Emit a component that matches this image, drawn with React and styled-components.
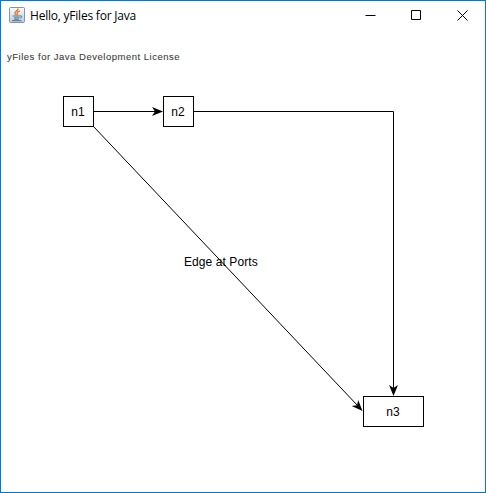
import React from 'react';
import styled, { createGlobalStyle } from 'styled-components';

const GlobalStyle = createGlobalStyle`
  * { box-sizing: border-box; }
  body { margin: 0; background: #fff; overflow: hidden; }
`;

const Window = styled.main`
  display: flex;
  flex-direction: column;
  width: 486px;
  height: 493px;
  border: 1px solid #0078d7;
  background: #fff;
  color: #000;
`;

const TitleBar = styled.header`
  display: flex;
  align-items: center;
  height: 30px;
  padding-left: 8px;
`;

const AppIcon = styled.svg`
  width: 16px;
  height: 16px;
  margin-bottom: 2px;
`;

const Title = styled.h1`
  flex: 1;
  margin: 0 0 0 5px;
  font: 400 12px/16px "Open Sans", sans-serif;
  letter-spacing: -0.22px;
  white-space: nowrap;
`;

const Controls = styled.div`
  display: flex;
  align-self: flex-start;
  gap: 1px;
`;

const ControlButton = styled.button`
  display: flex;
  align-items: center;
  justify-content: center;
  width: 45px;
  height: 29px;
  padding: 0;
  border: 0;
  background: transparent;
`;

const Canvas = styled.section`
  position: relative;
  flex: 1;
`;

const License = styled.div`
  padding: 20px 0 0 6px;
  font: 400 9.5px/12px "Liberation Sans", Arial, sans-serif;
  letter-spacing: 0.51px;
  -webkit-text-stroke: 0.1px #404040;
  color: #404040;
  white-space: nowrap;
`;

const Edges = styled.svg`
  position: absolute;
  inset: 0;
  width: 484px;
  height: 461px;
`;

const Node = styled.div`
  position: absolute;
  left: ${({ $x }) => $x}px;
  top: ${({ $y }) => $y}px;
  display: flex;
  align-items: center;
  justify-content: center;
  width: ${({ $width }) => $width}px;
  height: 31px;
  padding-right: 1px;
  border: 1px solid #000;
  background: #fff;
  font: 12px/14px "Liberation Sans", Arial, sans-serif;
`;

const EdgeLabel = styled.div`
  position: absolute;
  left: 183px;
  top: 224px;
  font: 12px/14px "Liberation Sans", Arial, sans-serif;
  letter-spacing: 0.08px;
  white-space: nowrap;
`;

const nodes = [
  { label: 'n1', x: 62, y: 65, width: 31 },
  { label: 'n2', x: 162, y: 65, width: 31 },
  { label: 'n3', x: 362, y: 365, width: 61 },
];

const arrows = [
  'translate(162 80.5)',
  'translate(392.5 365) rotate(90)',
  'translate(361.5 380) rotate(46.6)',
];

function JavaIcon() {
  return (
    <AppIcon viewBox="0 0 16 16" aria-hidden="true">
      <defs>
        <linearGradient id="tile" x1="0" y1="0" x2="0" y2="1">
          <stop offset="0" stopColor="#fafbfc" />
          <stop offset="1" stopColor="#bcccda" />
        </linearGradient>
      </defs>
      <rect x=".5" y=".5" width="15" height="15" rx="1" fill="url(#tile)" stroke="#8495a5" />
      <path d="M9 1.5C9.4 3.9 5.4 4.3 5.9 6.2c.2.8 1.1 1.2 1.3 1.9M10.9 3.9C9 4.7 7.8 5.4 8.2 6.3c.4.6.8 1.1.1 1.9" fill="none" stroke="#e77820" strokeWidth="1.3" />
      <path d="M3.8 9h7.4M5 10.9h5.2M5.3 12.3h4.4M11.2 8.9c2.4-.6 2.1 1.9-.5 2.3M3 13.7h9.5" fill="none" stroke="#436f93" strokeWidth=".95" />
    </AppIcon>
  );
}

function WindowControl({ label, d }) {
  return (
    <ControlButton aria-label={label}>
      <svg width="11" height="11" viewBox="0 0 11 11" fill="none" stroke="#000">
        <path d={d} />
      </svg>
    </ControlButton>
  );
}

export default function App() {
  return (
    <>
      <GlobalStyle />
      <Window>
        <TitleBar>
          <JavaIcon />
          <Title>Hello, yFiles for Java</Title>
          <Controls>
            <WindowControl label="Minimize" d="M.5 5.5h10" />
            <WindowControl label="Maximize" d="M.5.5h9v9h-9z" />
            <WindowControl label="Close" d="M.5.5l10 10m0-10l-10 10" />
          </Controls>
        </TitleBar>
        <Canvas>
          <License>yFiles for Java Development License</License>
          <Edges viewBox="0 0 484 461" aria-hidden="true">
            <g fill="none" stroke="#000">
              <path d="M93 80.5h62" />
              <path d="M193 80.5h199.5V358" />
              <path d="M92.5 95.5L357 375" />
            </g>
            {arrows.map((transform) => (
              <path key={transform} d="M0 0L-11-4.5L-8 0L-11 4.5z" fill="#000" transform={transform} />
            ))}
          </Edges>
          {nodes.map(({ label, x, y, width }) => (
            <Node key={label} $x={x} $y={y} $width={width}>{label}</Node>
          ))}
          <EdgeLabel>Edge at Ports</EdgeLabel>
        </Canvas>
      </Window>
    </>
  );
}
